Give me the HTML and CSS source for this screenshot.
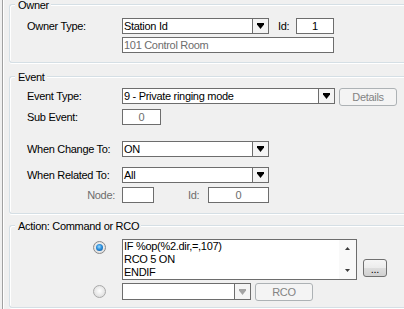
FILE: index.html
```html
<!DOCTYPE html>
<html>
<head>
<meta charset="utf-8">
<link rel="stylesheet" href="styles.css">
</head>
<body>
<div class="panel">
  <div class="group owner">
    <div class="group-title">Owner</div>
    <div class="row">
      <span class="label">Owner Type:</span>
      <div class="combo w147">
        <span class="combo-text">Station Id</span>
        <span class="combo-btn"><svg width="7" height="6" viewBox="0 0 7 6"><path d="M0 0h7v1.5L3.5 6 0 1.5z" fill="#000"/></svg></span>
      </div>
      <span class="label-id">Id:</span>
      <div class="edit w38 center">1</div>
    </div>
    <div class="row r-gap3">
      <span class="label"></span>
      <div class="edit w212 dim">101 Control Room</div>
    </div>
  </div>

  <div class="group event">
    <div class="group-title">Event</div>
    <div class="row">
      <span class="label">Event Type:</span>
      <div class="combo w213">
        <span class="combo-text">9 - Private ringing mode</span>
        <span class="combo-btn"><svg width="7" height="6" viewBox="0 0 7 6"><path d="M0 0h7v1.5L3.5 6 0 1.5z" fill="#000"/></svg></span>
      </div>
      <div class="btn disabled details">Details</div>
    </div>
    <div class="row r-gap5">
      <span class="label">Sub Event:</span>
      <div class="edit w39 center dim">0</div>
    </div>
    <div class="row r-gap16">
      <span class="label">When Change To:</span>
      <div class="combo w147">
        <span class="combo-text">ON</span>
        <span class="combo-btn"><svg width="7" height="6" viewBox="0 0 7 6"><path d="M0 0h7v1.5L3.5 6 0 1.5z" fill="#000"/></svg></span>
      </div>
    </div>
    <div class="row r-gap10">
      <span class="label">When Related To:</span>
      <div class="combo w147">
        <span class="combo-text">All</span>
        <span class="combo-btn"><svg width="7" height="6" viewBox="0 0 7 6"><path d="M0 0h7v1.5L3.5 6 0 1.5z" fill="#000"/></svg></span>
      </div>
    </div>
    <div class="row r-gap4">
      <span class="label right dim">Node:</span>
      <div class="edit w32"></div>
      <span class="label-id2 dim">Id:</span>
      <div class="edit w61 center dim">0</div>
    </div>
  </div>

  <div class="group action">
    <div class="group-title">Action: Command or RCO</div>
    <div class="row tall">
      <span class="radio-cell"><span class="radio on"><span class="dot"></span></span></span>
      <div class="memo">
        <div class="memo-text">IF %op(%2.dir,=,107)<br>RCO 5 ON<br>ENDIF</div>
        <div class="vscroll">
          <span class="sarrow"><svg width="5" height="3" viewBox="0 0 5 3"><path d="M2.5 0L5 3H0z" fill="#3c3c3c"/></svg></span>
          <span class="sarrow"><svg width="5" height="3" viewBox="0 0 5 3"><path d="M0 0h5L2.5 3z" fill="#3c3c3c"/></svg></span>
        </div>
      </div>
      <div class="btn dots">...</div>
    </div>
    <div class="row r2h r-gap3b">
      <span class="radio-cell"><span class="radio"></span></span>
      <div class="combo w129 h17">
        <span class="combo-text"></span>
        <span class="combo-btn"><svg width="7" height="6" viewBox="0 0 7 6"><path d="M0 0h7v1.5L3.5 6 0 1.5z" fill="#a3a3a3"/></svg></span>
      </div>
      <div class="btn disabled rco">RCO</div>
    </div>
  </div>
</div>
</body>
</html>
```

FILE: styles.css
```css
* { box-sizing: border-box; }
html, body { margin: 0; padding: 0; }
body {
  width: 404px;
  height: 309px;
  overflow: hidden;
  background: #f0f0f0;
  font-family: "Liberation Sans", Arial, sans-serif;
  font-size: 11px;
  line-height: 14px;
  letter-spacing: -0.3px;
  color: #000;
}
.panel {
  margin-left: 2px;
  height: 309px;
  border-left: 1px solid #a0a0a0;
  box-shadow: inset 1px 0 0 #fff;
  padding: 4px 0 0 6px;
}
.group {
  position: relative;
  border: 1px solid #d5dfe5;
  border-right: 0;
  border-radius: 3px 0 0 3px;
  box-shadow: inset 1px 1px 0 #fff, 0 1px 0 #fff;
  padding-left: 17px;
}
.group-title {
  position: absolute;
  top: -5px;
  left: 5px;
  padding: 0 2px 0 3px;
  line-height: 11px;
  background: #f0f0f0;
  white-space: nowrap;
}
.owner { padding-top: 13px; padding-bottom: 9px; }
.event { margin-top: 13px; padding-top: 11px; padding-bottom: 10px; }
.action { margin-top: 11px; padding-top: 13px; padding-bottom: 7px; }

.row { display: flex; align-items: center; height: 16px; }
.row.tall { height: auto; align-items: flex-start; }
.row.r2h { height: 17px; }
.r-gap3 { margin-top: 3px; }
.r-gap3b { margin-top: 3px; }
.r-gap4 { margin-top: 4px; }
.r-gap5 { margin-top: 5px; }
.r-gap10 { margin-top: 10px; }
.r-gap16 { margin-top: 16px; }

.label { width: 95px; flex: none; white-space: nowrap; }
.label.right { text-align: right; padding-right: 7px; }
.label-id { width: 18px; margin-left: 9px; flex: none; }
.label-id2 { width: 20px; margin-left: 34px; flex: none; }
.dim { color: #6d6d6d; }

.edit {
  flex: none;
  height: 16px;
  border: 1px solid #6d6d6d;
  background: #fff;
  padding: 0 1px;
  line-height: 14px;
  white-space: nowrap;
  overflow: hidden;
}
.center { text-align: center; }
.w32 { width: 32px; }
.w38 { width: 38px; }
.w39 { width: 39px; }
.w61 { width: 61px; }
.w212 { width: 212px; }

.combo {
  flex: none;
  display: flex;
  height: 16px;
  border: 1px solid #6d6d6d;
  background: #fff;
}
.combo.h17 { height: 17px; }
.w129 { width: 129px; }
.w147 { width: 147px; }
.w213 { width: 213px; }
.combo-text { flex: 1; padding-left: 1px; line-height: 14px; white-space: nowrap; overflow: hidden; }
.combo-btn {
  width: 16px;
  flex: none;
  border-left: 1px solid #6d6d6d;
  background: #f4f4f4;
  display: flex;
  align-items: center;
  justify-content: center;
}
.combo-btn svg { display: block; }

.btn {
  flex: none;
  height: 18px;
  border: 1px solid #707070;
  border-radius: 3px;
  background: linear-gradient(#f6f6f6 0, #ececec 50%, #dedede 50%, #d0d0d0 100%);
  text-align: center;
  line-height: 16px;
  align-self: flex-start;
}
.btn.disabled {
  border-color: #adb2b5;
  background: #f4f4f4;
  color: #838383;
}
.details { width: 58px; margin-left: 4px; }
.rco { width: 58px; margin-left: 4px; }
.dots { width: 24px; margin-left: 6px; margin-top: 20px; line-height: 18px; }

.radio-cell { width: 95px; flex: none; display: flex; padding-left: 66px; }
.row.tall .radio-cell { padding-top: 2px; }
.radio {
  width: 13px;
  height: 13px;
  border-radius: 50%;
  border: 1px solid #a9a9a9;
  background: radial-gradient(circle at 50% 45%, #ffffff 0, #ececec 45%, #d4d4d4 100%);
  display: flex;
  align-items: center;
  justify-content: center;
}
.radio.on { border-color: #8a8a8a; }
.dot {
  width: 7px;
  height: 7px;
  border-radius: 50%;
  background: radial-gradient(circle at 45% 40%, #9edcff 0, #2b8fdc 45%, #0b4a8c 100%);
}

.memo {
  flex: none;
  width: 235px;
  height: 41px;
  border: 1px solid #6d6d6d;
  background: #fff;
  display: flex;
}
.memo-text { flex: 1; padding: 0 1px; line-height: 13px; white-space: nowrap; overflow: hidden; }
.vscroll {
  width: 17px;
  flex: none;
  background: #f9f9f9;
  display: flex;
  flex-direction: column;
  justify-content: space-between;
}
.sarrow { height: 17px; display: flex; align-items: center; justify-content: center; }
.sarrow svg { display: block; }
```
